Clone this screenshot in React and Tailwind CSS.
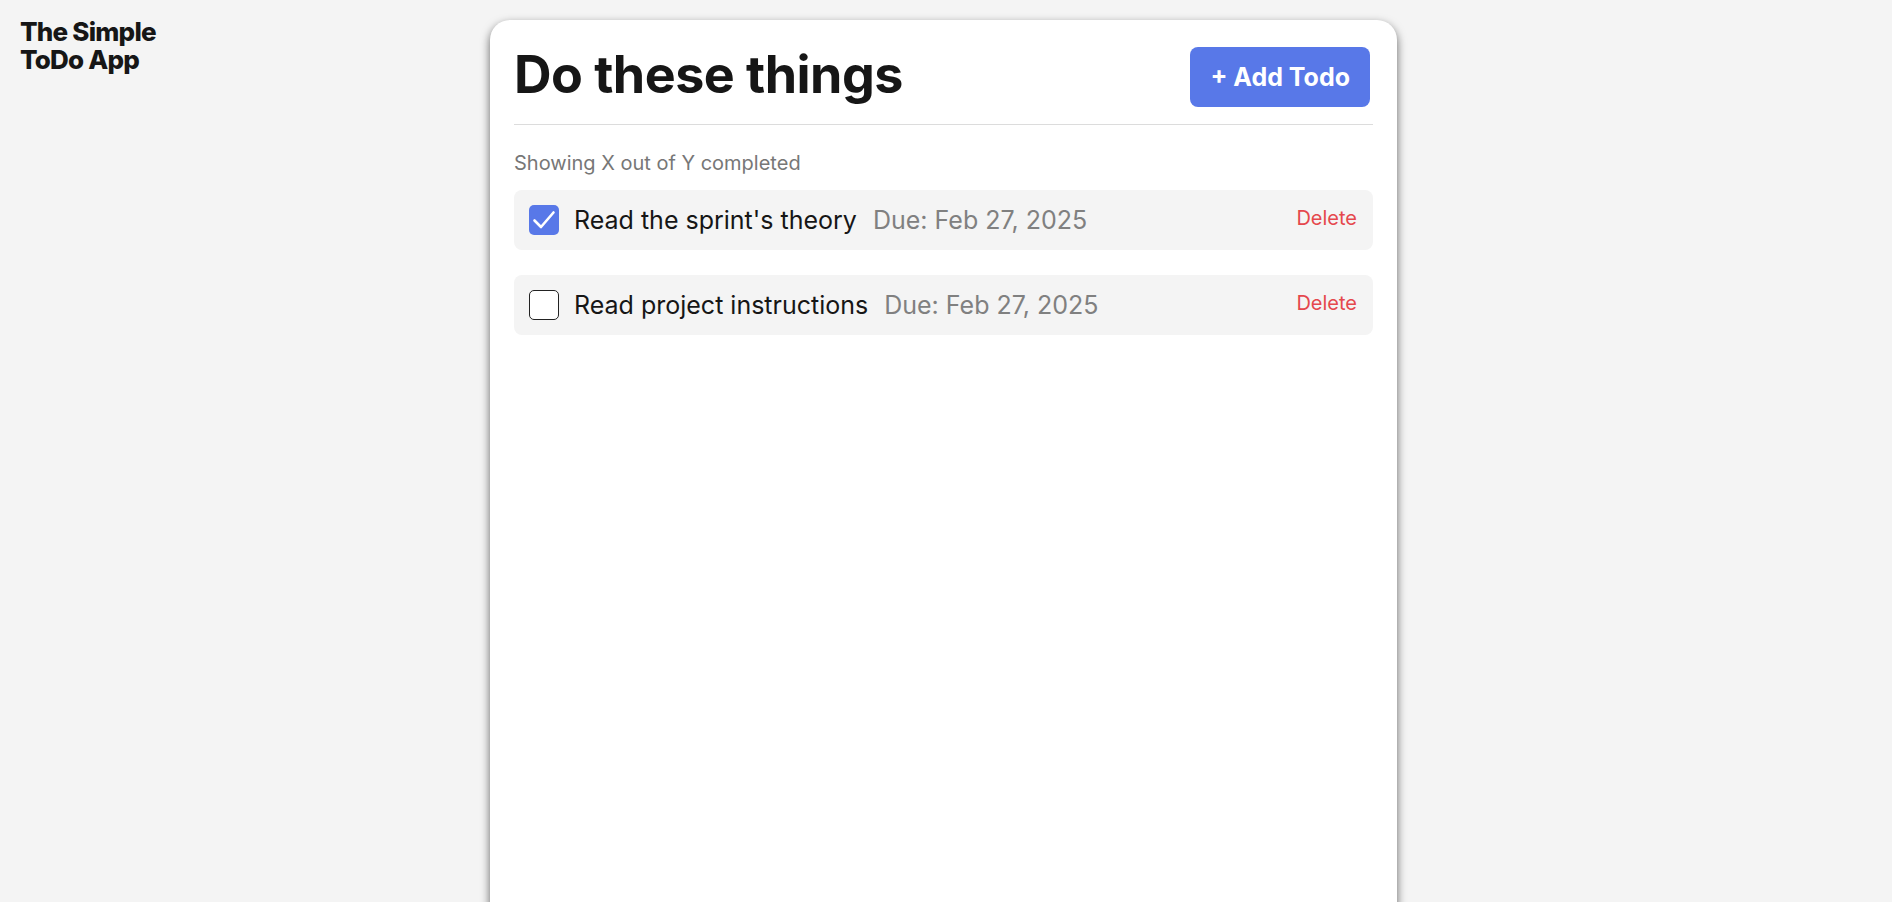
import { useState } from 'react';

const FONT = { fontFamily: 'Inter, "Noto Sans", sans-serif' };

const INITIAL_TODOS = [
  { id: 1, title: "Read the sprint's theory", due: 'Feb 27, 2025', done: true },
  { id: 2, title: 'Read project instructions', due: 'Feb 27, 2025', done: false },
];

function Checkbox({ checked, onChange }) {
  return (
    <button
      onClick={onChange}
      className={`flex h-[30px] w-[30px] shrink-0 items-center justify-center rounded-[5px] ${
        checked ? 'bg-[#5878e8]' : 'border border-[#222] bg-white'
      }`}
    >
      {checked && (
        <svg viewBox="0 0 30 30" className="h-[30px] w-[30px]" fill="none" stroke="white" strokeWidth="2.6" strokeLinecap="round" strokeLinejoin="round">
          <path d="M5.5 15.5l6.5 6.5L24.5 7.5" />
        </svg>
      )}
    </button>
  );
}

export default function App() {
  const [todos, setTodos] = useState(INITIAL_TODOS);

  const toggle = (id) =>
    setTodos((prev) => prev.map((t) => (t.id === id ? { ...t, done: !t.done } : t)));
  const remove = (id) => setTodos((prev) => prev.filter((t) => t.id !== id));

  return (
    <div className="min-h-screen bg-[#f4f4f4] text-[#161616]" style={FONT}>
      <div className="grid grid-cols-[490px_907px_1fr]">
        {/* Logo */}
        <div className="pl-5 pt-[18px]">
          <h2 className="text-[26px] font-extrabold leading-[28px] tracking-[-0.03em]">
            The Simple
            <br />
            ToDo App
          </h2>
        </div>

        {/* Card */}
        <div className="mt-5 h-[920px] rounded-[20px] bg-white px-6 pt-5 shadow-[0_4px_10px_rgba(0,0,0,0.6)]">
          <div className="flex items-center justify-between border-b border-[#dcdcdc] pb-[14px]">
            <h1 className="text-[52px] font-bold leading-[70px] tracking-[-0.01em]">Do these things</h1>
            <button className="mr-[3px] mt-[3px] rounded-lg bg-[#5878e8] px-[20px] py-[12px] text-[25px] font-bold leading-[36px] text-white">
              + Add Todo
            </button>
          </div>

          <p className="mt-[23px] text-[20px] leading-[30px] text-[#777]">Showing X out of Y completed</p>

          <ul className="mt-[12px] flex flex-col gap-[25px]">
            {todos.map((todo) => (
              <li key={todo.id} className="flex items-start justify-between rounded-lg bg-[#f4f4f4] py-3 pl-[15px] pr-4">
                <div className="flex items-center">
                  <Checkbox checked={todo.done} onChange={() => toggle(todo.id)} />
                  <span className="ml-[15px] text-[25px] leading-[36px]">{todo.title}</span>
                  <span className="ml-4 text-[25px] leading-[36px] text-[#808080]">Due: {todo.due}</span>
                </div>
                <button
                  onClick={() => remove(todo.id)}
                  className="mt-[1px] text-[20px] leading-[30px] text-[#e5484d]"
                >
                  Delete
                </button>
              </li>
            ))}
          </ul>
        </div>
      </div>
    </div>
  );
}
